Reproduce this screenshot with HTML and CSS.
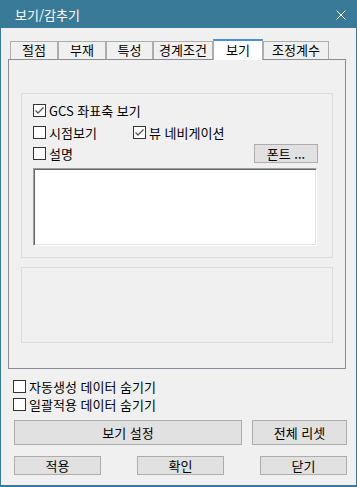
FILE: index.html
```html
<!DOCTYPE html>
<html lang="ko">
<head>
  <meta charset="UTF-8" />
  <title>보기/감추기</title>
  <link rel="stylesheet" href="styles.css">
</head>
<body>
  <div class="window">
    <div class="titlebar">
      <span class="title">보기/감추기</span>
      <svg class="close" width="10" height="10" viewBox="0 0 10 10">
        <path d="M0.5 0.5 L9.5 9.5 M9.5 0.5 L0.5 9.5" stroke="#fff" stroke-width="1" fill="none"/>
      </svg>
    </div>

    <div class="client">
      <!-- Onglets -->
      <div class="tabs">
        <div class="tab w48">절점</div>
        <div class="tab w48">부재</div>
        <div class="tab w47">특성</div>
        <div class="tab w60">경계조건</div>
        <div class="tab active">보기</div>
        <div class="tab w66">조정계수</div>
      </div>

      <div class="panel">
        <div class="group group-main">
          <div class="row">
            <label class="check"><span class="box checked"><svg width="11" height="11" viewBox="0 0 11 11"><path d="M1.5 5.5 L4 8 L9.5 2.5" stroke="#555" stroke-width="1.3" fill="none"/></svg></span>GCS 좌표축 보기</label>
          </div>
          <div class="row row-2">
            <label class="check col-1"><span class="box"></span>시점보기</label>
            <label class="check"><span class="box checked"><svg width="11" height="11" viewBox="0 0 11 11"><path d="M1.5 5.5 L4 8 L9.5 2.5" stroke="#555" stroke-width="1.3" fill="none"/></svg></span>뷰 네비게이션</label>
          </div>
          <div class="row row-3">
            <label class="check"><span class="box"></span>설명</label>
            <button class="btn btn-font">폰트 ...</button>
          </div>
          <div class="memo"></div>
        </div>
        <div class="group group-empty"></div>
      </div>

      <div class="bottom">
        <label class="check"><span class="box"></span>자동생성 데이터 숨기기</label>
        <label class="check"><span class="box"></span>일괄적용 데이터 숨기기</label>
        <div class="btn-row">
          <button class="btn btn-view">보기 설정</button>
          <button class="btn btn-reset">전체 리셋</button>
        </div>
        <div class="btn-row small">
          <button class="btn btn-sm">적용</button>
          <button class="btn btn-sm">확인</button>
          <button class="btn btn-sm">닫기</button>
        </div>
      </div>
    </div>
  </div>
</body>
</html>
```

FILE: styles.css
```css
body {
  margin: 0;
  font-family: "Noto Sans CJK KR", "Liberation Sans", sans-serif;
  font-size: 12px;
  color: #000;
}
.window {
  width: 357px;
  height: 487px;
  box-sizing: border-box;
  background-color: #3a7a99;
  padding: 0 1px 2px 1px;
  display: flex;
  flex-direction: column;
}
.titlebar {
  height: 28px;
  display: flex;
  align-items: center;
  justify-content: space-between;
  padding: 0 10px 0 14px;
  color: #fff;
  flex-shrink: 0;
}
.title {
  font-size: 13px;
  line-height: 1;
}
.close {
  display: block;
  margin-top: 2px;
}
.client {
  flex: 1;
  background-color: #f0f0f0;
  padding: 11px 9px 0 7px;
}

/* Onglets */
.tabs {
  display: flex;
  align-items: flex-end;
  height: 20px;
  padding-left: 2px;
}
.tab {
  box-sizing: border-box;
  height: 18px;
  border: 1px solid #adadad;
  border-bottom: none;
  background-color: #f0f0f0;
  text-align: center;
  line-height: 16px;
  font-size: 13px;
}
.w47 { width: 47px; }
.w48 { width: 48px; }
.w60 { width: 60px; }
.w66 { width: 66px; }
.tab.active {
  width: 50px;
  height: 21px;
  margin-bottom: -1px;
  background-color: #fff;
  border-top: 2px solid #4a8fd8;
  line-height: 18px;
  position: relative;
}

.panel {
  box-sizing: border-box;
  width: 338px;
  height: 310px;
  border: 1px solid #898c95;
  padding: 33px 12px 0 12px;
}
.group {
  box-sizing: border-box;
  width: 312px;
  border: 1px solid #dcdcdc;
}
.group-main {
  height: 165px;
  padding: 10px 15px 0 11px;
}
.group-empty {
  height: 76px;
  margin-top: 9px;
}
.row {
  display: flex;
  align-items: center;
  height: 13px;
}
.row:first-child {
  margin-bottom: 9px;
}
.row-2 {
  margin-bottom: 5px;
}
.row-3 {
  height: 19px;
  justify-content: space-between;
  margin-bottom: 5px;
}
.col-1 {
  width: 100px;
}
.check {
  display: flex;
  align-items: center;
  font-size: 13px;
  line-height: 13px;
  white-space: nowrap;
}
.box {
  box-sizing: border-box;
  width: 13px;
  height: 13px;
  border: 1px solid #333;
  background-color: #fff;
  margin-right: 3px;
  display: flex;
  align-items: center;
  justify-content: center;
  flex-shrink: 0;
}
.box svg {
  display: block;
}
.memo {
  box-sizing: border-box;
  width: 284px;
  height: 78px;
  background-color: #fff;
  border: 1px solid;
  border-color: #a0a0a0 #fff #fff #a0a0a0;
  box-shadow: inset 1px 1px #696969, inset -1px -1px #e3e3e3;
}

.btn {
  box-sizing: border-box;
  font-family: inherit;
  font-size: 13px;
  color: #000;
  background-color: #e1e1e1;
  border: 1px solid #adadad;
  padding: 0;
  line-height: 1;
}
.btn-font {
  width: 64px;
  height: 19px;
  margin-right: -1px;
}

.bottom {
  padding: 11px 0 0 5px;
}
.bottom .check {
  height: 13px;
  margin-bottom: 5px;
}
.btn-row {
  display: flex;
  justify-content: space-between;
  margin-top: 9px;
  padding-left: 1px;
}
.btn-view {
  width: 228px;
  height: 25px;
}
.btn-reset {
  width: 95px;
  height: 25px;
}
.btn-row.small {
  margin-top: 11px;
}
.btn-sm {
  width: 87px;
  height: 19px;
}
```
